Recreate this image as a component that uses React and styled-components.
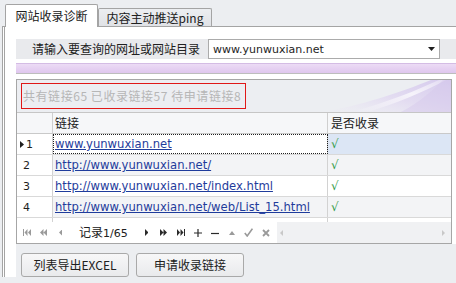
import React from 'react';
import styled, { createGlobalStyle } from 'styled-components';

const cjk = `"Noto Sans CJK SC", "Noto Sans", sans-serif`;
const latin = `"DejaVu Sans", "Noto Sans CJK SC", sans-serif`;

const GlobalStyle = createGlobalStyle`
  html, body { margin: 0; padding: 0; }
  body { background: #eceef1; font-family: ${cjk}; font-size: 12px; color: #1e1e1e; }
  #root { width: 456px; height: 283px; overflow: hidden; }
`;

const Window = styled.div`
  width: 456px;
  height: 283px;
  box-sizing: border-box;
  padding: 0 0 6px 2px;
  display: flex;
  flex-direction: column;
  background: #eceef1;
  overflow: hidden;
`;

const TabStrip = styled.div`
  display: flex;
  align-items: flex-end;
  height: 26px;
  flex: none;
  padding-left: 3px;
  position: relative;
  z-index: 1;
`;

const Tab = styled.div`
  box-sizing: border-box;
  width: ${p => p.$w}px;
  height: ${p => (p.$active ? 23 : 18)}px;
  margin-bottom: ${p => (p.$active ? -1 : 0)}px;
  border: 1px solid #a4a4a4;
  border-bottom: none;
  border-radius: 2px 2px 0 0;
  background: ${p => (p.$active ? '#ffffff' : 'linear-gradient(#eceef1, #e0e2e6)')};
  display: flex;
  align-items: center;
  justify-content: center;
  font-family: ${cjk};
  font-size: 12px;
  line-height: 16px;
  color: #202020;
  padding-top: ${p => (p.$active ? 0 : 1)}px;
`;

const Panel = styled.div`
  flex: 1;
  display: flex;
  flex-direction: column;
  min-height: 0;
  border-top: 1px solid #a4a4a4;
  border-left: 3px double #a4a4a4;
  background: #ffffff;
  padding: 12px 0 0 11px;
`;

const QueryRow = styled.div`
  display: flex;
  height: 20px;
  flex: none;
  background: #e9eaed;
`;

const QueryLabel = styled.div`
  width: 192px;
  box-sizing: border-box;
  padding-left: 16px;
  font-family: ${cjk};
  font-size: 12px;
  line-height: 20px;
  color: #202020;
  white-space: nowrap;
`;

const Combo = styled.div`
  width: 232px;
  height: 20px;
  box-sizing: border-box;
  border: 1px solid #ababab;
  background: #ffffff;
  display: flex;
  align-items: center;
  justify-content: space-between;
  padding: 0 4px 0 4px;
  font-family: ${latin};
  font-size: 11px;
  color: #1e1e1e;
`;

const ProgressBar = styled.div`
  flex: none;
  margin-top: 4px;
  height: 9px;
  background: linear-gradient(#ecdcf5, #dfc6ee);
  border-top: 1px solid #d4bce4;
  border-bottom: 1px solid #bdbdbd;
`;

const Grid = styled.div`
  flex: none;
  margin-top: 5px;
  width: 436px;
  box-sizing: border-box;
  border: 1px solid #a6a6a6;
  display: flex;
  flex-direction: column;
  background: #ffffff;
`;

const GroupPanel = styled.div`
  position: relative;
  height: 33px;
  box-sizing: border-box;
  padding: 3px 0 0 4px;
  background: #eceef2;
  border-bottom: 1px solid #c6c6c6;
  overflow: hidden;
`;

const Swoosh = styled.svg`
  position: absolute;
  right: 0;
  top: 0;
`;

const SummaryBox = styled.div`
  position: relative;
  width: 225px;
  height: 26px;
  box-sizing: border-box;
  border: 1px solid #e01818;
  padding-left: 1px;
  font-family: ${cjk};
  font-size: 12px;
  letter-spacing: 0.55px;
  line-height: 24px;
  color: #b6b6b6;
  white-space: nowrap;
`;

const Columns = styled.div`
  display: grid;
  grid-template-columns: 36px 275px 1fr;
  height: ${p => p.$h}px;
  box-sizing: border-box;
  border-bottom: ${p => (p.$line ? `1px solid ${p.$line}` : 'none')};
  background: ${p => p.$bg || '#ffffff'};
`;

const HeaderCell = styled.div`
  border-right: 1px solid #cfcfcf;
  padding-left: ${p => p.$pad || 0}px;
  font-family: ${cjk};
  font-size: 12px;
  line-height: 19px;
  color: #202020;
  background: #f6f7f9;
  &:last-child { border-right: none; }
`;

const IndicatorCell = styled.div`
  display: flex;
  align-items: center;
  gap: 2px;
  padding-left: ${p => (p.$current ? 3 : 6)}px;
  border-right: 1px solid #d2d2d2;
  background: #ffffff;
  font-family: ${latin};
  font-size: 11px;
  color: #1e1e1e;
`;

const LinkCell = styled.div`
  display: flex;
  align-items: center;
  padding-left: 2px;
  border-right: 1px solid #d2d2d2;
  outline: ${p => (p.$focus ? '1px dotted #202020' : 'none')};
  outline-offset: -1px;
  background: ${p => (p.$focus ? '#ffffff' : 'transparent')};
  white-space: nowrap;
  overflow: hidden;
`;

const Link = styled.a`
  font-family: ${latin};
  font-size: 11.6px;
  color: #1f3c9c;
  text-decoration: underline;
`;

const StatusCell = styled.div`
  display: flex;
  align-items: center;
  padding-left: 3px;
  background: ${p => (p.$selected ? '#dce6f5' : 'transparent')};
  font-family: ${latin};
  font-size: 12px;
  color: #2f9a45;
`;

const FillerCell = styled.div`
  border-right: 1px solid #d2d2d2;
  &:last-child { border-right: none; }
`;

const Navigator = styled.div`
  display: flex;
  align-items: center;
  height: 21px;
  padding-left: 1px;
  background: #ffffff;
`;

const NavButton = styled.div`
  width: 17px;
  height: 21px;
  flex: none;
  display: flex;
  align-items: center;
  justify-content: center;
  color: ${p => (p.$dim ? '#9a9a9a' : '#2a2a2a')};
  margin-left: ${p => p.$ml || 0}px;
`;

const NavText = styled.div`
  margin-left: 10px;
  width: 49px;
  font-family: ${cjk};
  font-size: 12px;
  line-height: 21px;
  color: #202020;
  white-space: nowrap;
  & span { font-family: ${latin}; font-size: 11px; }
`;

const HScroll = styled.div`
  flex: 1;
  margin-left: 3px;
  height: 21px;
  background: #f0f1f3;
  display: flex;
  align-items: center;
  justify-content: space-between;
  padding: 0 6px 0 3px;
  color: #c8c8c8;
`;

const ButtonBar = styled.div`
  flex: 1;
  display: flex;
  align-items: flex-start;
  gap: 7px;
  padding: 9px 0 0 5px;
  background: #eceef1;
`;

const Button = styled.button`
  width: 108px;
  height: 24px;
  box-sizing: border-box;
  border: 1px solid #a9a9a9;
  border-radius: 3px;
  background: linear-gradient(#f7f7f8, #e9eaec);
  font-family: ${cjk};
  font-size: 12px;
  line-height: 16px;
  color: #202020;
  padding: 0;
`;

const Tri = ({ dir = 'right', w = 4, h = 7 }) => {
  const d = {
    right: `M0 0 L${w} ${h / 2} L0 ${h}Z`,
    left: `M${w} 0 L0 ${h / 2} L${w} ${h}Z`,
    down: `M0 0 L${w} 0 L${w / 2} ${h}Z`,
  }[dir];
  return (
    <svg width={w} height={h} viewBox={`0 0 ${w} ${h}`}>
      <path d={d} fill="currentColor" />
    </svg>
  );
};

const Icon = ({ kind }) => {
  const c = 'currentColor';
  switch (kind) {
    case 'first':
      return (
        <svg width="8" height="7" viewBox="0 0 8 7">
          <rect x="0" y="0" width="1" height="7" fill={c} />
          <path d="M4.5 0 L1.5 3.5 L4.5 7Z M8 0 L5 3.5 L8 7Z" fill={c} />
        </svg>
      );
    case 'prevpage':
      return (
        <svg width="7" height="7" viewBox="0 0 7 7">
          <path d="M3.5 0 L0 3.5 L3.5 7Z M7 0 L3.5 3.5 L7 7Z" fill={c} />
        </svg>
      );
    case 'prev':
      return <Tri dir="left" w={3.5} h={7} />;
    case 'next':
      return <Tri dir="right" w={3.5} h={7} />;
    case 'nextpage':
      return (
        <svg width="7" height="7" viewBox="0 0 7 7">
          <path d="M0 0 L3.5 3.5 L0 7Z M3.5 0 L7 3.5 L3.5 7Z" fill={c} />
        </svg>
      );
    case 'last':
      return (
        <svg width="8" height="7" viewBox="0 0 8 7">
          <path d="M0 0 L3 3.5 L0 7Z M3.5 0 L6.5 3.5 L3.5 7Z" fill={c} />
          <rect x="7" y="0" width="1" height="7" fill={c} />
        </svg>
      );
    case 'plus':
      return (
        <svg width="8" height="8" viewBox="0 0 8 8">
          <path d="M4 0 V8 M0 4 H8" stroke={c} strokeWidth="1.2" />
        </svg>
      );
    case 'minus':
      return (
        <svg width="8" height="8" viewBox="0 0 8 8">
          <path d="M0 4.5 H8" stroke={c} strokeWidth="1.2" />
        </svg>
      );
    case 'up':
      return (
        <svg width="6" height="4" viewBox="0 0 6 4">
          <path d="M0 4 L3 0 L6 4Z" fill={c} />
        </svg>
      );
    case 'check':
      return (
        <svg width="9" height="9" viewBox="0 0 9 9">
          <path d="M0.8 5 L3.2 8 L8.4 0.6" stroke={c} strokeWidth="1.6" fill="none" />
        </svg>
      );
    case 'cross':
      return (
        <svg width="8" height="8" viewBox="0 0 8 8">
          <path d="M1 1 L7 7 M7 1 L1 7" stroke={c} strokeWidth="1.8" />
        </svg>
      );
    default:
      return null;
  }
};

const rows = [
  { n: 1, url: 'www.yunwuxian.net' },
  { n: 2, url: 'http://www.yunwuxian.net/' },
  { n: 3, url: 'http://www.yunwuxian.net/index.html' },
  { n: 4, url: 'http://www.yunwuxian.net/web/List_15.html' },
];

export default function App() {
  return (
    <>
      <GlobalStyle />
      <Window>
        <TabStrip>
          <Tab $active $w={93}>网站收录诊断</Tab>
          <Tab $w={114}>内容主动推送ping</Tab>
        </TabStrip>
        <Panel>
          <QueryRow>
            <QueryLabel>请输入要查询的网址或网站目录</QueryLabel>
            <Combo>
              <span>www.yunwuxian.net</span>
              <Tri dir="down" w={7} h={4} />
            </Combo>
          </QueryRow>
          <ProgressBar />
          <Grid>
            <GroupPanel>
              <Swoosh width="150" height="32" viewBox="0 0 150 32">
                <defs>
                  <linearGradient id="swA" x1="0" y1="1" x2="1" y2="0">
                    <stop offset="0" stopColor="#ece8f4" stopOpacity="0" />
                    <stop offset="0.5" stopColor="#e2daf1" stopOpacity="0.9" />
                    <stop offset="1" stopColor="#d6cbed" />
                  </linearGradient>
                  <linearGradient id="swB" x1="0" y1="1" x2="1" y2="0">
                    <stop offset="0" stopColor="#ffffff" stopOpacity="0" />
                    <stop offset="0.6" stopColor="#ffffff" stopOpacity="0.7" />
                    <stop offset="1" stopColor="#ffffff" stopOpacity="0.3" />
                  </linearGradient>
                </defs>
                <path d="M20 32 C60 26 100 12 130 0 L150 0 L150 32 Z" fill="url(#swA)" />
                <path d="M50 32 C88 22 116 10 138 0 L145 0 C122 12 95 24 66 32 Z" fill="url(#swB)" />
                <path d="M100 32 C116 24 130 12 142 0 L150 0 L150 32 Z" fill="#d4c8ec" opacity="0.45" />
              </Swoosh>
              <SummaryBox>共有链接65 已收录链接57 待申请链接8</SummaryBox>
            </GroupPanel>
            <Columns $h={21} $line="#c9c9c9">
              <HeaderCell />
              <HeaderCell $pad={2}>链接</HeaderCell>
              <HeaderCell $pad={3}>是否收录</HeaderCell>
            </Columns>
            {rows.map((r, i) => (
              <Columns key={r.n} $h={21} $line="#d9d9d9" $bg={i % 2 === 1 ? '#f3f4f6' : '#ffffff'}>
                <IndicatorCell $current={i === 0}>
                  {i === 0 && <Tri dir="right" w={4} h={7} />}
                  <span>{r.n}</span>
                </IndicatorCell>
                <LinkCell $focus={i === 0}>
                  <Link>{r.url}</Link>
                </LinkCell>
                <StatusCell $selected={i === 0}>√</StatusCell>
              </Columns>
            ))}
            <Columns $h={4}>
              <FillerCell />
              <FillerCell />
              <FillerCell />
            </Columns>
            <Navigator>
              <NavButton $dim><Icon kind="first" /></NavButton>
              <NavButton $dim><Icon kind="prevpage" /></NavButton>
              <NavButton $dim><Icon kind="prev" /></NavButton>
              <NavText>记录<span>1/65</span></NavText>
              <NavButton $ml={10}><Icon kind="next" /></NavButton>
              <NavButton><Icon kind="nextpage" /></NavButton>
              <NavButton><Icon kind="last" /></NavButton>
              <NavButton><Icon kind="plus" /></NavButton>
              <NavButton><Icon kind="minus" /></NavButton>
              <NavButton $dim><Icon kind="up" /></NavButton>
              <NavButton $dim><Icon kind="check" /></NavButton>
              <NavButton $dim><Icon kind="cross" /></NavButton>
              <HScroll>
                <Tri dir="left" w={3} h={6} />
                <Tri dir="right" w={3} h={6} />
              </HScroll>
            </Navigator>
          </Grid>
          <ButtonBar>
            <Button>列表导出EXCEL</Button>
            <Button>申请收录链接</Button>
          </ButtonBar>
        </Panel>
      </Window>
    </>
  );
}
